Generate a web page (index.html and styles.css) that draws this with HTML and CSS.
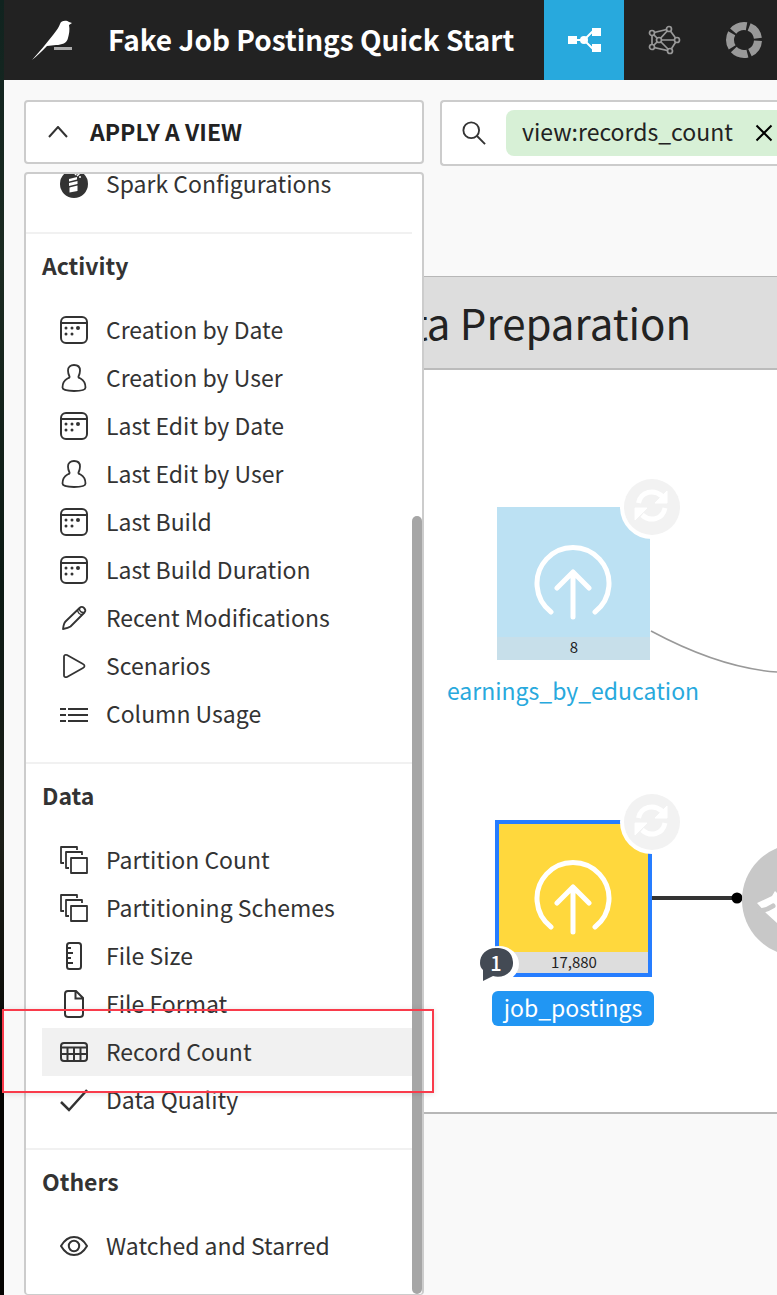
FILE: index.html
```html
<!DOCTYPE html>
<html lang="en">
<head>
<meta charset="utf-8">
<title>Fake Job Postings Quick Start</title>
<link rel="stylesheet" href="styles.css">
</head>
<body>
<svg class="sprite" aria-hidden="true">
  <symbol id="calendar" viewBox="0 0 28 28"><rect x="1" y="1" width="26" height="26" rx="5"/><path d="M1 7h26"/><g class="solid"><circle cx="6" cy="12" r="1.5"/><circle cx="12" cy="12" r="1.5"/><circle cx="18" cy="12" r="2"/><circle cx="6" cy="18" r="1.5"/><circle cx="12" cy="18" r="1.5"/></g></symbol>
  <symbol id="user" viewBox="0 0 28 28"><path class="soft" d="M9.500 12.500C8.500 10.500 8 8.500 8 6.500C8 3 10.500 1 14 1S20 3 20 6.500C20 8.500 19.500 10.500 18.500 12.500C18 13.500 19 13.800 20.500 14.500C24 16.500 25.500 20 25.500 23.500C25.500 26 20 27 14 27S2.500 26 2.500 23.500C2.500 20 4 16.500 7.500 14.500C9 13.800 10 13.500 9.500 12.500Z"/></symbol>
  <symbol id="pencil" viewBox="0 0 28 28"><path class="soft" d="M3 25C3.500 21 4 19 5.500 17.500L19.500 4C22.500 1 27 5.500 24.500 8.500L10.500 22.500C8.500 24 6 24.500 3 25Z"/><path class="thin" d="M17.500 6C18 9 19.500 10.500 22 10.500M19.500 4C19 7 21 9 24.500 8.500"/></symbol>
  <symbol id="play" viewBox="0 0 28 28"><path class="soft" d="M4 4.500C4 3 5.500 2.500 7 3L23 12C25 13 25 15 23 16L7 25C5.500 25.500 4 25 4 23.500Z"/></symbol>
  <symbol id="columns" viewBox="0 0 28 28"><path d="M0 9h6M8 9h20M0 15h6M8 15h20M0 21h6M8 21h20"/></symbol>
  <symbol id="layers" viewBox="0 0 28 28"><path class="soft" d="M4 17H1V1H17V4M9 22H6V6H22V9"/><rect class="soft" x="11" y="12" width="16" height="15"/></symbol>
  <symbol id="ruler" viewBox="0 0 28 28"><rect x="7" y="1" width="14" height="26" rx="2.500"/><path class="soft" d="M7 6h4M7 11h6M7 16h4M7 21h6"/></symbol>
  <symbol id="file" viewBox="0 0 28 28"><path d="M8 1H16L23 8V24C23 26 22 27 20 27H8C6 27 5 26 5 24V4C5 2 6 1 8 1ZM15.500 1V8.500H23"/></symbol>
  <symbol id="table" viewBox="0 0 28 28"><rect x="1" y="5" width="26" height="18" rx="3"/><path d="M1 9.500h26M1 16h26M7.500 10v13M14 10v13M20.500 10v13"/></symbol>
  <symbol id="check" viewBox="0 0 28 28"><path class="thick" d="M1 16L9 24L27 4"/></symbol>
  <symbol id="eye" viewBox="0 0 28 28"><path d="M1 14C8 2 20 2 27 14C20 26 8 26 1 14Z"/><circle cx="14" cy="14" r="5.200"/></symbol>
  <symbol id="spark" viewBox="0 0 28 28"><circle class="solid" cx="14" cy="14" r="14"/><path class="light" d="M9 9L17 7V9.500L9 11.500ZM9 13L17.500 11V14L9 16ZM9.500 17.500L17.500 15.500V21L9.500 22.500Z"/><path class="fine" d="M15 5l2-2m0 3l4-4m-2 5h2"/></symbol>
  <symbol id="dataset" viewBox="0 0 78 78"><path d="M17 68A36 36 0 1 1 61 68M39 73V28M23 44L39 28L55 44"/></symbol>
  <symbol id="sync" viewBox="0 0 58 58"><circle class="disc" cx="29" cy="29" r="28"/><path class="arc" d="M15.500 25C18 13 31 11 39 18M42 30C39.500 42 27 44 19 37"/><path class="head" d="M44 13V25H32ZM12 42V30H24Z"/></symbol>
</svg>

<div class="app">
  <header class="topbar">
    <svg class="bird" viewBox="0 0 42 42" role="img" aria-label="Home"><path d="M1 41C8 33 15 25 22 16C26 11 28 8 29 5C30 1 36 1 38 3L41 4L38 6C39 11 38 15 37 19C36 24 31 26 25 26L16 27C10 33 6 37 1 41Z"/><path class="perch" d="M23 28H41V31H23Z"/></svg>
    <h1 class="title">Fake Job Postings Quick Start</h1>
    <nav class="tabs">
      <a class="tab active" href="#flow" aria-label="Flow"><svg viewBox="0 0 40 40"><path class="stroke" d="M8 20H20L29 11M20 20L29 29"/><path d="M4 16h9v8H4zM28 8h9v8h-9zM28 24h9v8h-9z"/><circle cx="20" cy="20" r="4"/></svg></a>
      <a class="tab" href="#lab" aria-label="Analyses"><svg class="graph" viewBox="0 0 40 40"><path d="M8 13V27L26 31L33 20L25 9L8 13M8 13L15 20L8 27M25 9L15 20H33M15 20L26 31"/><g><circle cx="8" cy="13" r="2.500"/><circle cx="8" cy="27" r="2.500"/><circle cx="15" cy="20" r="2.500"/><circle cx="25" cy="9" r="2.500"/><circle cx="33" cy="20" r="2.500"/><circle cx="26" cy="31" r="2.500"/></g></svg></a>
      <a class="tab" href="#jobs" aria-label="Jobs"><svg class="ring" viewBox="0 0 40 40"><circle cx="20" cy="20" r="14" pathLength="100"/></svg></a>
    </nav>
  </header>

  <main class="workspace">
    <div class="toolbar">
      <button class="view-toggle" type="button" aria-expanded="true"><svg viewBox="0 0 20 12"><path d="M1 11L10 1L19 11"/></svg>APPLY A VIEW</button>
      <div class="search">
        <svg class="lens" viewBox="0 0 26 26"><circle cx="10" cy="10" r="8.500"/><path d="M16 16L25 25"/></svg>
        <div class="chip"><span>view:records_count</span><button type="button" aria-label="Remove filter"><svg viewBox="0 0 18 18"><path d="M1.500 1.500L16.500 16.500M16.500 1.500L1.500 16.500"/></svg></button></div>
      </div>
    </div>

    <section class="zone">
      <h2 class="zone-title">Data Preparation</h2>
      <div class="canvas">
        <svg class="edges" viewBox="0 0 357 740" aria-hidden="true"><path class="edge" d="M231 261Q300 298 357 302"/><path class="edge strong" d="M231 528H316"/><circle cx="317" cy="528" r="5.500"/><circle class="recipe" cx="378" cy="530" r="56"/><path class="brush" d="M337 533L352 526L355 521L357 523V553L346 543Z"/><path class="slot" d="M340 541Q347 540 353 536"/></svg>
        <article class="node earnings">
          <div class="tile"><svg class="glyph"><use href="#dataset"/></svg><span class="count">8</span></div>
          <a class="name" href="#earnings">earnings_by_education</a>
          <svg class="sync"><use href="#sync"/></svg>
        </article>
        <article class="node postings">
          <div class="tile"><svg class="glyph"><use href="#dataset"/></svg><span class="count">17,880</span></div>
          <a class="name" href="#postings">job_postings</a>
          <svg class="sync"><use href="#sync"/></svg>
          <span class="comments"><svg viewBox="0 0 44 40"><ellipse class="halo" cx="20" cy="18" rx="20" ry="18"/><path d="M4 24V35L14 30C23 33 35 27 34 16C33 6 27 2 17 2C7 2 1 9 1 17C1 20 2 22 4 24Z"/></svg><b>1</b></span>
        </article>
      </div>
    </section>
  </main>

  <aside class="panel">
    <section class="group">
      <ul>
        <li><button type="button"><svg><use href="#spark"/></svg>Spark Configurations</button></li>
      </ul>
    </section>
    <section class="group">
      <h3>Activity</h3>
      <ul>
        <li><button type="button"><svg><use href="#calendar"/></svg>Creation by Date</button></li>
        <li><button type="button"><svg><use href="#user"/></svg>Creation by User</button></li>
        <li><button type="button"><svg><use href="#calendar"/></svg>Last Edit by Date</button></li>
        <li><button type="button"><svg><use href="#user"/></svg>Last Edit by User</button></li>
        <li><button type="button"><svg><use href="#calendar"/></svg>Last Build</button></li>
        <li><button type="button"><svg><use href="#calendar"/></svg>Last Build Duration</button></li>
        <li><button type="button"><svg><use href="#pencil"/></svg>Recent Modifications</button></li>
        <li><button type="button"><svg><use href="#play"/></svg>Scenarios</button></li>
        <li><button type="button"><svg><use href="#columns"/></svg>Column Usage</button></li>
      </ul>
    </section>
    <section class="group">
      <h3>Data</h3>
      <ul>
        <li><button type="button"><svg><use href="#layers"/></svg>Partition Count</button></li>
        <li><button type="button"><svg><use href="#layers"/></svg>Partitioning Schemes</button></li>
        <li><button type="button"><svg><use href="#ruler"/></svg>File Size</button></li>
        <li><button type="button"><svg><use href="#file"/></svg>File Format</button></li>
        <li><button class="selected" type="button"><svg><use href="#table"/></svg>Record Count</button></li>
        <li><button type="button"><svg><use href="#check"/></svg>Data Quality</button></li>
      </ul>
    </section>
    <section class="group">
      <h3>Others</h3>
      <ul>
        <li><button type="button"><svg><use href="#eye"/></svg>Watched and Starred</button></li>
      </ul>
    </section>
    <div class="thumb"></div>
  </aside>
</div>
<div class="callout"></div>
</body>
</html>
```
FILE: styles.css
```css
* { box-sizing: border-box; }

body {
  margin: 0;
  padding-left: 4px;
  background: linear-gradient(#10231f, #1c2b22 20%, #0c1a14 45%, #1d1f18 65%, #050402 85%);
  color: #222;
  font-family: "Noto Sans CJK SC", "Noto Sans", sans-serif;
  font-size: 23px;
  line-height: 32px;
  overflow: hidden;
}

h1, h2, h3, ul { margin: 0; padding: 0; }
ul { list-style: none; }
a { color: inherit; text-decoration: none; }
button {
  border: 0;
  padding: 0;
  background: none;
  color: inherit;
  font: inherit;
  text-align: left;
}
svg { display: block; flex: none; fill: none; }
.sprite { position: absolute; width: 0; height: 0; }

.app {
  position: relative;
  min-height: 100vh;
  background: #f9f9f9;
  overflow: hidden;
}

/* Top bar */
.topbar {
  display: flex;
  align-items: center;
  height: 80px;
  padding-left: 27px;
  background: #222;
  color: #fff;
}
.bird { width: 42px; height: 42px; margin-right: 35px; fill: #fff; }
.perch { fill: #aaa; }
.title {
  flex: none;
  width: 436px;
  padding-bottom: 2px;
  font-size: 28px;
  line-height: 40px;
  white-space: nowrap;
}
.tabs { display: flex; }
.tab {
  display: grid;
  place-items: center;
  width: 80px;
  height: 80px;
  color: #999;
}
.tab svg { width: 40px; height: 40px; fill: currentColor; }
.tab.active { background: #28a9dd; color: #fff; }
.stroke { fill: none; stroke: currentColor; stroke-width: 2; }
.tab .graph { fill: none; stroke: currentColor; stroke-width: 1.7; }
.graph g { fill: #222; }
.tab .ring { fill: none; stroke: currentColor; stroke-width: 8; stroke-dasharray: 17 3; stroke-dashoffset: -1; }

/* Toolbar */
.toolbar { display: flex; align-items: flex-start; gap: 16px; padding: 20px 0 0 20px; }
.view-toggle {
  display: flex;
  flex: none;
  gap: 22px;
  width: 400px;
  height: 64px;
  padding-left: 22px;
  border: 2px solid #ccc;
  border-radius: 4px;
  background: #fff;
  font-weight: 700;
  line-height: 58px;
}
.view-toggle svg { align-self: center; width: 20px; height: 12px; stroke: #333; stroke-width: 2; }
.search {
  display: flex;
  flex: 1;
  align-items: center;
  gap: 20px;
  height: 66px;
  min-width: 0;
  padding-left: 20px;
  border: 2px solid #ccc;
  border-right: 0;
  border-radius: 4px 0 0 4px;
  background: #fff;
}
.lens { width: 24px; height: 24px; stroke: #333; stroke-width: 2; }
.chip {
  display: flex;
  flex: 1 0 auto;
  align-items: center;
  justify-content: space-between;
  gap: 19px;
  height: 46px;
  padding: 0 4px 0 16px;
  border-radius: 8px 0 0 8px;
  background: #d7f0d6;
}
.chip span { padding-bottom: 4px; }
.chip svg { width: 18px; height: 18px; stroke: #000; stroke-width: 2; }

/* Flow zone */
.zone {
  margin: 110px 0 0 300px;
  border: 1px solid #b7b7b7;
  border-right: 0;
  border-bottom-width: 2px;
  background: #fff;
}
.zone-title {
  padding: 15px 0 16px 55px;
  border-bottom: 2px solid #bbb;
  background: #ddd;
  font-size: 42px;
  font-weight: 400;
  line-height: 60px;
  white-space: nowrap;
}
.canvas { position: relative; height: 742px; margin-left: 115px; }
.edges { position: absolute; top: 0; left: 0; width: 357px; height: 740px; fill: #000; }
.edge { fill: none; stroke: #999; stroke-width: 1.5; }
.edge.strong { stroke: #333; stroke-width: 4; }
.recipe { fill: #c8c8c8; }
.brush { fill: #fff; }
.slot { fill: none; stroke: #c8c8c8; stroke-width: 5; stroke-linecap: round; }

.node {
  position: absolute;
  display: flex;
  flex-direction: column;
  align-items: center;
  width: 252px;
}
.earnings { left: 27px; top: 137px; }
.postings { left: 27px; top: 450px; }
.tile {
  display: flex;
  flex-direction: column;
  align-items: center;
  width: 153px;
  padding-top: 37px;
  background: #bce1f3;
}
.glyph {
  width: 78px;
  height: 78px;
  margin-bottom: 15px;
  stroke: #fff;
  stroke-width: 5;
  stroke-linecap: round;
  stroke-linejoin: round;
}
.count {
  align-self: stretch;
  padding: 0 0 3px 2px;
  background: #c7dfea;
  color: #222;
  font-size: 15px;
  line-height: 20px;
  text-align: center;
}
.postings .tile { width: 157px; border: 4px solid #267dff; padding-top: 35px; background: #ffd83d; }
.postings .count { padding-bottom: 1px; background: #ddd; }
.name {
  margin-top: 14px;
  padding: 0 12px 3px;
  border-radius: 6px;
  color: #28a9dd;
  line-height: 32px;
}
.postings .name { background: #2196f3; color: #fff; }
.sync { position: absolute; top: -29px; left: 176px; width: 58px; height: 58px; overflow: visible; }
#sync { overflow: visible; }
.postings .sync { top: -27px; }
.disc { fill: #f2f2f2; stroke: #fff; stroke-width: 8; paint-order: stroke; }
.arc { stroke: #fff; stroke-width: 5; }
.head { fill: #fff; stroke: #fff; stroke-width: 1; stroke-linejoin: round; }
.comments { position: absolute; top: 126px; left: 32px; }
.comments svg { width: 44px; height: 40px; fill: #434a54; }
.comments .halo { fill: #fff; }
.comments b {
  position: absolute;
  inset: 1px 10px auto 0;
  color: #fff;
  font-size: 20px;
  font-weight: 500;
  text-align: center;
}

/* View menu */
.panel {
  position: absolute;
  top: 172px;
  bottom: 0;
  left: 20px;
  display: flex;
  flex-direction: column;
  justify-content: flex-end;
  width: 400px;
  padding-right: 10px;
  border: 2px solid #ccc;
  border-bottom-width: 1px;
  border-radius: 4px;
  background: #fff;
  color: #333;
  overflow: hidden;
}
.group { flex: none; padding: 0 0 24px 16px; }
.group + .group { border-top: 2px solid #f1f1f1; }
.group h3 { padding: 15px 0 25px; font-size: 23px; }
.group button {
  display: flex;
  gap: 18px;
  width: 100%;
  height: 48px;
  padding-left: 18px;
  line-height: 46px;
}
.group button.selected { background: #f1f1f1; }
.group button svg { align-self: center; width: 28px; height: 28px; }
.group svg { stroke: #333; stroke-width: 2; }
.solid { fill: #333; stroke: none; }
.thin { stroke-width: 1.5; }
.soft { stroke-width: 1.8; stroke-linejoin: round; }
.thick { stroke-width: 2.5; }
.light { fill: #fff; stroke: none; }
.fine { stroke: #fff; stroke-width: 1.5; }
.thumb {
  position: absolute;
  top: 342px;
  right: 0;
  bottom: 0;
  width: 10px;
  border-radius: 5px;
  background: #a6a6a6;
}

.callout {
  position: absolute;
  bottom: 202px;
  left: 2px;
  width: 432px;
  height: 84px;
  border: 2px solid #f93b4b;
  box-shadow: 0 1px 6px rgba(0, 0, 0, 0.12);
  pointer-events: none;
}
```
